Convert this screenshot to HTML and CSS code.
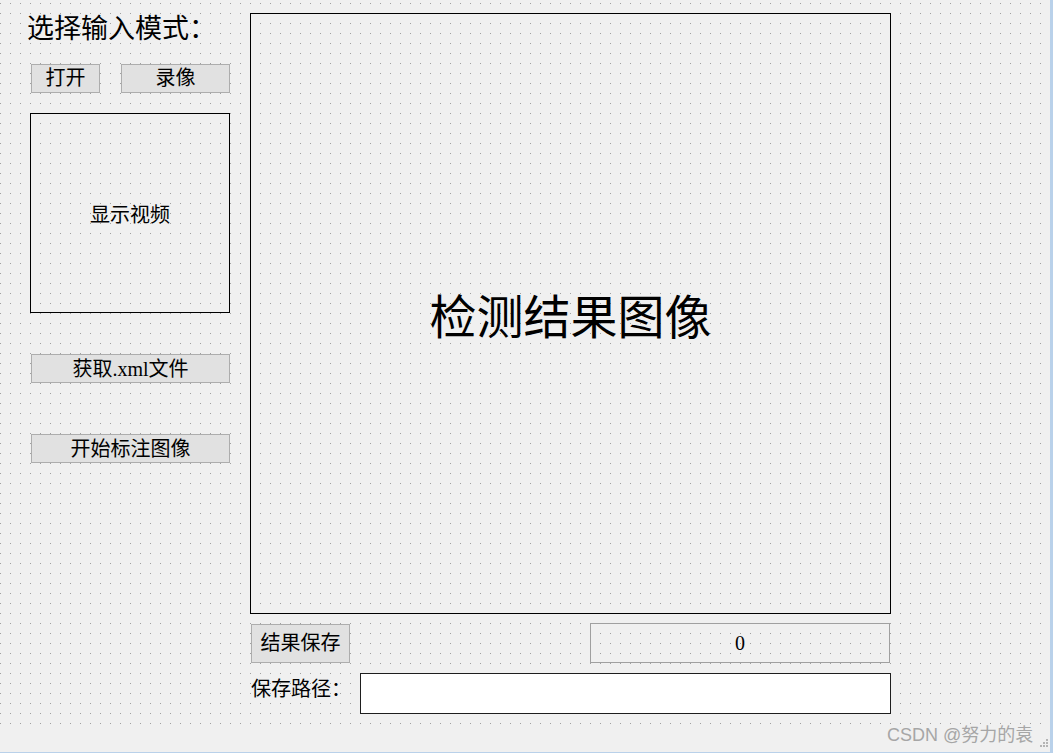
FILE: index.html
```html
<!DOCTYPE html>
<html lang="zh-CN">
<head>
<meta charset="utf-8">
<title>检测界面</title>
<link rel="stylesheet" href="styles.css">
</head>
<body>
<div class="window">
  <div class="form">
    <div class="left">
      <div class="title">选择输入模式：</div>
      <div class="btn-row">
        <div class="btn btn-open">打开</div>
        <div class="btn btn-rec">录像</div>
      </div>
      <div class="video">显示视频</div>
      <div class="btn btn-wide btn-xml">获取.xml文件</div>
      <div class="btn btn-wide btn-mark">开始标注图像</div>
    </div>
    <div class="right">
      <div class="result">检测结果图像</div>
      <div class="save-row">
        <div class="btn btn-save">结果保存</div>
        <div class="count">0</div>
      </div>
      <div class="path-row">
        <div class="path-label">保存路径：</div>
        <div class="path-input"></div>
      </div>
    </div>
  </div>
  <div class="watermark">CSDN @努力的袁</div>
  <svg class="grip" width="10" height="10" viewBox="0 0 10 10">
    <rect x="7" y="1" width="2" height="2"/>
    <rect x="4" y="4" width="2" height="2"/>
    <rect x="7" y="4" width="2" height="2"/>
    <rect x="1" y="7" width="2" height="2"/>
    <rect x="4" y="7" width="2" height="2"/>
    <rect x="7" y="7" width="2" height="2"/>
  </svg>
</div>
</body>
</html>
```

FILE: styles.css
```css
html, body {
  margin: 0;
  padding: 0;
  background: #f0f0f0;
}

body {
  font-family: "Liberation Serif", "Noto Sans CJK SC", serif;
  color: #000;
}

.window {
  position: relative;
  width: 1050px;
  height: 752px;
  background: #f0f0f0;
  border-right: 3px solid #b9d1ea;
  border-bottom: 1px solid #b9d1ea;
  overflow: hidden;
}

.form {
  display: flex;
  align-items: flex-start;
  height: 730px;
  background-image: url("data:image/svg+xml,%3Csvg xmlns='http://www.w3.org/2000/svg' width='10' height='10'%3E%3Crect width='1' height='1' fill='%23a0a0a0'/%3E%3C/svg%3E");
  background-position: 0 3px;
  background-repeat: repeat;
}

.left {
  display: flex;
  flex-direction: column;
  align-items: flex-start;
  width: 230px;
}

.title {
  margin: 14px 0 0 27px;
  font-size: 27px;
  line-height: 30px;
  height: 30px;
  white-space: nowrap;
}

.btn {
  box-sizing: border-box;
  border: 1px solid #adadad;
  background: #e1e1e1;
  font-size: 20px;
  text-align: center;
  white-space: nowrap;
}

.btn-row {
  display: flex;
  margin-top: 20px;
  height: 29px;
}

.btn-open {
  margin-left: 31px;
  width: 69px;
  height: 29px;
  line-height: 27px;
}

.btn-rec {
  margin-left: 21px;
  width: 109px;
  height: 29px;
  line-height: 27px;
}

.video {
  box-sizing: border-box;
  margin: 20px 0 0 30px;
  width: 200px;
  height: 200px;
  border: 1px solid #000;
  display: flex;
  align-items: center;
  justify-content: center;
  font-size: 20px;
}

.btn-wide {
  margin-left: 31px;
  width: 199px;
  height: 29px;
  line-height: 28px;
}

.btn-xml {
  margin-top: 41px;
}

.btn-mark {
  margin-top: 51px;
}

.right {
  display: flex;
  flex-direction: column;
  margin-left: 20px;
  width: 641px;
}

.result {
  box-sizing: border-box;
  margin-top: 13px;
  width: 641px;
  height: 601px;
  border: 1px solid #000;
  display: flex;
  align-items: center;
  justify-content: center;
  font-size: 47px;
}

.save-row {
  display: flex;
  align-items: flex-start;
  margin-top: 9px;
  height: 40px;
}

.btn-save {
  margin: 1px 0 0 1px;
  width: 99px;
  height: 39px;
  line-height: 37px;
}

.count {
  box-sizing: border-box;
  margin-left: 240px;
  width: 300px;
  height: 40px;
  border: 1px solid #a0a0a0;
  text-align: center;
  line-height: 38px;
  font-size: 20px;
}

.path-row {
  display: flex;
  align-items: flex-start;
  margin-top: 10px;
}

.path-label {
  margin: 4px 0 0 1px;
  width: 109px;
  font-size: 20px;
  line-height: 24px;
  white-space: nowrap;
}

.path-input {
  box-sizing: border-box;
  width: 531px;
  height: 41px;
  border: 1px solid #1e1e1e;
  background: #fff;
}

.watermark {
  position: absolute;
  left: 887px;
  top: 723px;
  font-family: "Liberation Sans", "Noto Sans CJK SC", sans-serif;
  font-size: 18px;
  line-height: 24px;
  color: #a6a6a6;
  white-space: nowrap;
}

.grip {
  position: absolute;
  left: 1039px;
  top: 738px;
  fill: #b4b4b4;
}
```
